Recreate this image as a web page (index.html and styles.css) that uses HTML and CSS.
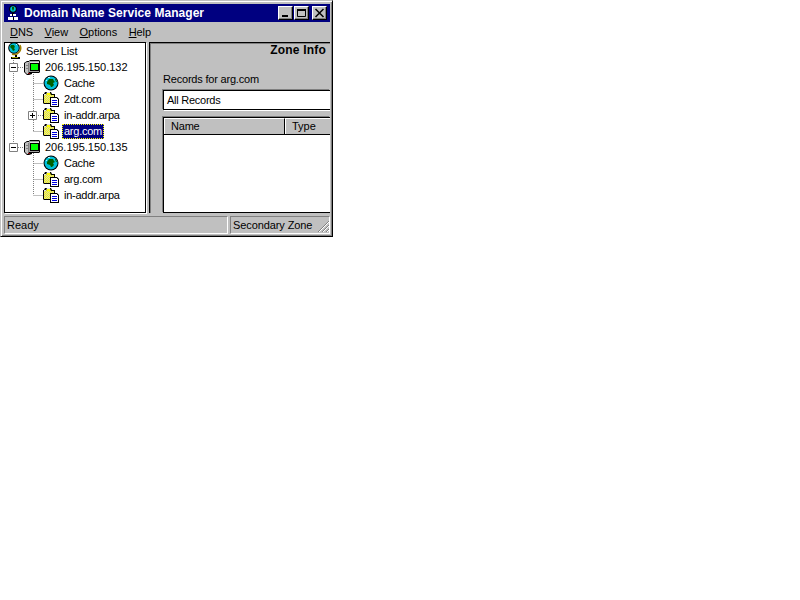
FILE: index.html
```html
<!DOCTYPE html>
<html>
<head>
<meta charset="utf-8">
<title>Domain Name Service Manager</title>
<link rel="stylesheet" href="styles.css">
</head>
<body>
<svg class="defs" width="0" height="0">
  <defs>
    <symbol id="i-globe" viewBox="0 0 16 16">
      <circle cx="8" cy="8" r="7.500" fill="#000"/>
      <circle cx="8" cy="8" r="6.500" fill="#00c0d8"/>
      <path d="M6 4h4l1 2 1 1-2 1 1 2-2 2H8l-1-2-3-1 0-2z" fill="#006000"/>
      <path d="M12 4h1l1 3h-1z" fill="#006000"/>
      <path d="M3 5h1v1H3zM5 2h2v1H5z" fill="#b0f8ff"/>
    </symbol>
    <symbol id="i-stand" viewBox="0 0 16 18">
      <path d="M4 15h9v2H4zM8 13h2v2H8z" fill="#000"/>
      <path d="M5 15h6v1H5z" fill="#a0a000"/>
      <path d="M13 3a6.500 6.500 0 0 1-8 9" fill="none" stroke="#a08000" stroke-width="1.500"/>
      <circle cx="7" cy="6" r="5.800" fill="#000"/>
      <circle cx="7" cy="6" r="4.800" fill="#00c0d8"/>
      <path d="M4 3h3l1 2-1 1 1 2-2 1-1-2-2-2z" fill="#006000"/>
      <path d="M9 2h1v1H9z" fill="#b0f8ff"/>
    </symbol>
    <symbol id="i-server" viewBox="0 0 16 16">
      <path d="M0 4l3-2h2l1-1h9l1 1v11l-1 1H8v1l-3 1H3l-3-3z" fill="#000"/>
      <path d="M1 4l2-1h2v10l-1 2H3l-2-2z" fill="#c0c0c0"/>
      <path d="M4 4h1v10H4z" fill="#808080"/>
      <path d="M5 2h10v11H5z" fill="#a0a0a0"/>
      <path d="M6 3h9v1H6z" fill="#e0e0e0"/>
      <path d="M6 4h9v8H6z" fill="#000"/>
      <path d="M7 5h7v6H7z" fill="#00ff00"/>
      <path d="M4 14h2v1H4z" fill="#800000"/>
      <path d="M2 6h2v1H2zM2 9h2v1H2z" fill="#808080"/>
    </symbol>
    <symbol id="i-zone" viewBox="0 0 16 16">
      <path d="M0 3h1l1-2h6l1 2h3v10H1l-1-1z" fill="#000"/>
      <path d="M1 4h2l1-2h3l1 2h3v8H1z" fill="#ffff00"/>
      <path class="dither" d="M1 4.500h10M2 5.500h9M1 6.500h10M2 7.500h9M1 8.500h10M2 9.500h9M1 10.500h10M2 11.500h9"/>
      <path d="M1 3h2l1-2h3v1H4L3 4H1z" fill="#e0e0e0"/>
      <path d="M7 6h7l2 2v8H7z" fill="#000"/>
      <path d="M8 7h6v1h1v7H8z" fill="#fff"/>
      <path d="M9 9h5v1H9zM9 11h5v1H9zM9 13h5v1H9z" fill="#0000e0"/>
    </symbol>
    <symbol id="i-minus" viewBox="0 0 9 9">
      <path d="M.5.500h8v8h-8z" fill="#fff" stroke="#808080"/>
      <path d="M2 4h5v1H2z" fill="#000"/>
    </symbol>
    <symbol id="i-plus" viewBox="0 0 9 9">
      <path d="M.5.500h8v8h-8z" fill="#fff" stroke="#808080"/>
      <path d="M2 4h5v1H2zM4 2h1v5H4z" fill="#000"/>
    </symbol>
  </defs>
</svg>
<div class="window">
  <header class="titlebar">
    <svg class="app-icon" width="16" height="16" viewBox="0 0 16 16">
      <circle cx="7" cy="4" r="3.800" fill="#000"/>
      <circle cx="7" cy="4" r="2.800" fill="#00c0d8"/>
      <path d="M6 2h2v2l-1 2-1-2z" fill="#006000"/>
      <path d="M6 8h2v2H6z" fill="#000"/>
      <path d="M4 9h6v2H4z" fill="#fff"/>
      <path d="M2 12h10v3H2z" fill="#fff"/>
      <path d="M6 9h1v2H6zM7 12h1v3H7z" fill="#000"/>
    </svg>
    <span class="title">Domain Name Service Manager</span>
    <span class="caption-buttons">
      <span class="cbtn"><svg width="11" height="10" viewBox="0 0 11 10"><path d="M2 7h6v2H2z" fill="#000"/></svg></span>
      <span class="cbtn"><svg width="11" height="10" viewBox="0 0 11 10"><path d="M1.500 1.500h8v7h-8z" fill="none" stroke="#000"/><path d="M1 1h9v2H1z"/></svg></span>
      <span class="cbtn close"><svg width="11" height="10" viewBox="0 0 11 10"><path d="M1.500 1l8 8M9.500 1l-8 8" stroke="#000" stroke-width="1.500"/></svg></span>
    </span>
  </header>
  <nav class="menubar">
    <span class="menu"><u>D</u>NS</span>
    <span class="menu"><u>V</u>iew</span>
    <span class="menu"><u>O</u>ptions</span>
    <span class="menu"><u>H</u>elp</span>
  </nav>
  <main class="panes">
    <section class="tree">
      <svg class="tree-lines" width="60" height="170" viewBox="0 0 60 170">
        <path d="M8.500 15v5M8.500 28v72M13 24.500h6M13 104.500h6M28.500 29v59M28.500 40.500h10M28.500 56.500h10M33 72.500h5M28.500 88.500h10M28.500 110v42M28.500 120.500h10M28.500 136.500h10M28.500 152.500h10" fill="none" stroke="#808080" stroke-dasharray="1 1"/>
      </svg>
      <div class="row lvl0"><svg class="ico stand"><use href="#i-stand"/></svg><span class="label">Server List</span></div>
      <div class="row lvl1"><svg class="toggle"><use href="#i-minus"/></svg><svg class="ico"><use href="#i-server"/></svg><span class="label">206.195.150.132</span></div>
      <div class="row lvl2"><svg class="ico"><use href="#i-globe"/></svg><span class="label">Cache</span></div>
      <div class="row lvl2"><svg class="ico"><use href="#i-zone"/></svg><span class="label">2dt.com</span></div>
      <div class="row lvl2 has-toggle"><svg class="toggle"><use href="#i-plus"/></svg><svg class="ico"><use href="#i-zone"/></svg><span class="label">in-addr.arpa</span></div>
      <div class="row lvl2"><svg class="ico"><use href="#i-zone"/></svg><span class="label selected">arg.com</span></div>
      <div class="row lvl1"><svg class="toggle"><use href="#i-minus"/></svg><svg class="ico"><use href="#i-server"/></svg><span class="label">206.195.150.135</span></div>
      <div class="row lvl2"><svg class="ico"><use href="#i-globe"/></svg><span class="label">Cache</span></div>
      <div class="row lvl2"><svg class="ico"><use href="#i-zone"/></svg><span class="label">arg.com</span></div>
      <div class="row lvl2"><svg class="ico"><use href="#i-zone"/></svg><span class="label">in-addr.arpa</span></div>
    </section>
    <section class="zone">
      <h2 class="zone-title">Zone Info</h2>
      <div class="records-label">Records for arg.com</div>
      <div class="records-field">All Records</div>
      <div class="list">
        <div class="list-head">
          <span class="col col-name">Name</span>
          <span class="col col-type">Type</span>
        </div>
        <div class="list-body"></div>
      </div>
    </section>
  </main>
  <footer class="statusbar">
    <span class="status status-main">Ready</span>
    <span class="status status-zone">Secondary Zone</span>
    <svg class="grip" width="13" height="13" viewBox="0 0 13 13"><path d="M12 1L1 12M12 5l-7 7M12 9l-3 3" stroke="#808080" fill="none"/><path d="M12 2L2 12M12 6l-6 6M12 10l-2 2" stroke="#fff" fill="none"/></svg>
  </footer>
</div>
</body>
</html>
```
FILE: styles.css
```css
html, body {
  margin: 0;
  padding: 0;
  background: #fff;
}
body {
  font-family: "Liberation Sans", Arial, sans-serif;
  font-size: 11px;
  color: #000;
}
.defs {
  position: absolute;
}
.dither {
  fill: none;
  stroke: #d0d0c0;
  stroke-dasharray: 1 1;
}
.window {
  box-sizing: border-box;
  width: 333px;
  height: 237px;
  background: #c0c0c0;
  border: 1px solid;
  border-color: #c0c0c0 #000 #000 #c0c0c0;
  box-shadow: inset 1px 1px 0 #fff, inset -1px -1px 0 #808080;
  padding: 3px 2px 2px 3px;
  display: flex;
  flex-direction: column;
}
.titlebar {
  height: 18px;
  flex: none;
  background: #000080;
  color: #fff;
  display: flex;
  align-items: center;
  padding: 0 3px 0 2px;
}
.app-icon {
  flex: none;
}
.title {
  font-weight: 700;
  font-size: 12px;
  letter-spacing: 0.05px;
  white-space: nowrap;
  flex: 1;
  padding-left: 2px;
}
.caption-buttons {
  display: flex;
  gap: 1px;
}
.cbtn {
  box-sizing: border-box;
  width: 15px;
  height: 14px;
  background: #c0c0c0;
  border: 1px solid;
  border-color: #fff #000 #000 #fff;
  box-shadow: inset -1px -1px 0 #808080;
  display: flex;
  align-items: center;
  justify-content: center;
}
.cbtn.close {
  margin-left: 2px;
}
.menubar {
  height: 20px;
  flex: none;
  display: flex;
  align-items: center;
  padding-left: 6px;
  gap: 11.5px;
  letter-spacing: -0.05px;
}
.menu u {
  text-decoration: underline;
}
.panes {
  flex: 1;
  min-height: 0;
  display: flex;
  gap: 3px;
}
.tree {
  position: relative;
  box-sizing: border-box;
  width: 142px;
  height: 171px;
  flex: none;
  background: #fff;
  border: 1px solid #000;
  box-shadow: 1px 1px 0 #fff;
  overflow: hidden;
}
.tree-lines {
  position: absolute;
  left: 0;
  top: 0;
}
.row {
  position: relative;
  height: 16px;
  display: flex;
  align-items: center;
  white-space: nowrap;
}
.lvl0 {
  padding-left: 2px;
}
.lvl1 {
  padding-left: 4px;
}
.lvl2 {
  padding-left: 38px;
}
.lvl2.has-toggle {
  padding-left: 23px;
}
.toggle {
  width: 9px;
  height: 9px;
  margin-right: 6px;
  flex: none;
}
.ico {
  width: 16px;
  height: 16px;
  margin-right: 1px;
  flex: none;
}
.ico.stand {
  width: 16px;
  height: 18px;
  margin-right: 0;
}
.label {
  margin-left: 2px;
  padding: 0 2px;
  line-height: 15px;
}
.lvl0 .label {
  margin-left: 1px;
  letter-spacing: -0.1px;
}
.lvl2 .label {
  letter-spacing: -0.25px;
}
.selected {
  background: #000080;
  color: #fff;
  outline: 1px dotted #ffff00;
  outline-offset: -1px;
}
.zone {
  flex: 1;
  min-width: 0;
  height: 171px;
  box-sizing: border-box;
  border-top: 1px solid #000;
  border-left: 1px solid #000;
  box-shadow: inset 1px 1px 0 #808080;
  padding-left: 13px;
  display: flex;
  flex-direction: column;
  overflow: hidden;
}
.zone-title {
  margin: 0;
  font-size: 12px;
  font-weight: 700;
  text-align: right;
  padding: 0 4px 0 0;
  height: 28px;
  letter-spacing: 0.2px;
}
.records-label {
  height: 18px;
  margin-top: 1px;
  line-height: 14px;
  letter-spacing: -0.2px;
}
.records-field {
  box-sizing: border-box;
  height: 20px;
  background: #fff;
  border: 1px solid #000;
  border-right: 0;
  box-shadow: -1px -1px 0 #808080, 1px 1px 0 #fff;
  padding: 2px 0 0 3px;
  line-height: 14px;
  letter-spacing: -0.25px;
}
.list {
  flex: 1;
  margin-top: 7px;
  min-height: 0;
  display: flex;
  flex-direction: column;
  border: 1px solid #000;
  border-right: 0;
  box-shadow: -1px -1px 0 #808080;
  background: #fff;
}
.list-head {
  display: flex;
  height: 16px;
  flex: none;
  background: #c0c0c0;
  border-bottom: 1px solid #000;
}
.col {
  box-sizing: border-box;
  height: 16px;
  padding-left: 6px;
  line-height: 15px;
  border-top: 1px solid #fff;
  border-left: 1px solid #fff;
}
.col-name {
  width: 121px;
  border-right: 1px solid #000;
  letter-spacing: -0.2px;
}
.col-type {
  flex: 1;
}
.list-body {
  flex: 1;
  background: #fff;
}
.statusbar {
  height: 21px;
  flex: none;
  display: flex;
  align-items: flex-end;
  position: relative;
  gap: 2px;
  box-sizing: border-box;
}
.status {
  box-sizing: border-box;
  height: 18px;
  border: 1px solid;
  border-color: #808080 #fff #fff #808080;
  padding-left: 2px;
  line-height: 16px;
  white-space: nowrap;
}
.status-main {
  width: 224px;
}
.status-zone {
  flex: 1;
  padding-left: 2px;
  letter-spacing: -0.1px;
}
.grip {
  position: absolute;
  right: 0;
  bottom: 1px;
}
```
